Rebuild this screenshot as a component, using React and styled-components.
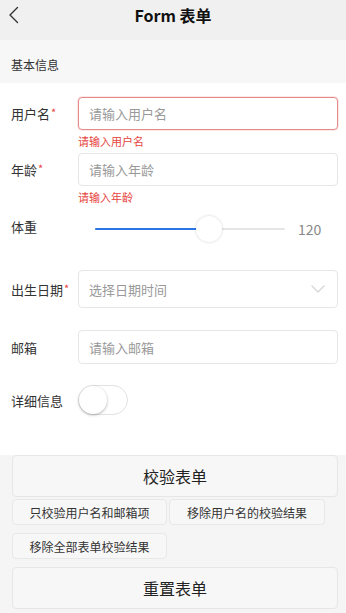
import React, { useState } from "react";
import styled, { createGlobalStyle } from "styled-components";

const GlobalStyle = createGlobalStyle`
  html, body {
    margin: 0;
    padding: 0;
    background: #f5f5f5;
  }
  body {
    font-family: "Noto Sans CJK SC", "Noto Sans", "Liberation Sans", sans-serif;
    color: #333;
  }
  * {
    box-sizing: border-box;
  }
`;

const App = () => {
  const [weight] = useState(120);
  const percent = 0.6; // 滑块位置

  return (
    <Page>
      <GlobalStyle />
      <NavBar>
        <BackButton aria-label="back">
          <svg width="12" height="18" viewBox="0 0 12 18" fill="none">
            <polyline
              points="9.5,1.5 2,9 9.5,16.5"
              stroke="#333"
              strokeWidth="1.4"
              strokeLinecap="round"
              strokeLinejoin="round"
            />
          </svg>
        </BackButton>
        <NavTitle>Form 表单</NavTitle>
      </NavBar>

      <SectionTitle>基本信息</SectionTitle>

      <FormBody>
        <Row>
          <Label required>用户名</Label>
          <Input placeholder="请输入用户名" $error />
        </Row>
        <ErrorText>请输入用户名</ErrorText>

        <Row>
          <Label required>年龄</Label>
          <Input placeholder="请输入年龄" />
        </Row>
        <ErrorText>请输入年龄</ErrorText>

        <SliderRow>
          <Label $nudge={-3}>体重</Label>
          <SliderWrap>
            <Track>
              <TrackFill style={{ width: `${percent * 100}%` }} />
              <Thumb style={{ left: `${percent * 100}%` }} />
            </Track>
          </SliderWrap>
          <SliderValue>{weight}</SliderValue>
        </SliderRow>

        <Row $gap={21}>
          <Label required>出生日期</Label>
          <Picker>
            <span>选择日期时间</span>
            <svg width="14" height="8" viewBox="0 0 14 8" fill="none">
              <polyline
                points="1,1 7,7 13,1"
                stroke="#d5d5d5"
                strokeWidth="1.2"
                strokeLinecap="round"
                strokeLinejoin="round"
              />
            </svg>
          </Picker>
        </Row>

        <Row $gap={22}>
          <Label>邮箱</Label>
          <Input placeholder="请输入邮箱" $h={34} />
        </Row>

        <Row $gap={21}>
          <Label>详细信息</Label>
          <Switch>
            <SwitchKnob />
          </Switch>
        </Row>
      </FormBody>

      <Actions>
        <BigButton>校验表单</BigButton>
        <SmallRow>
          <SmallButton $w={155}>只校验用户名和邮箱项</SmallButton>
          <SmallButton $w={156}>移除用户名的校验结果</SmallButton>
        </SmallRow>
        <SmallRow $top={8}>
          <SmallButton $w={155}>移除全部表单校验结果</SmallButton>
        </SmallRow>
        <BigButton $top={8}>重置表单</BigButton>
      </Actions>
    </Page>
  );
};

export default App;

const Page = styled.div`
  width: 346px;
  min-height: 613px;
  background: #f5f5f5;
`;

const NavBar = styled.header`
  height: 40px;
  background: #f0f0f0;
  display: flex;
  align-items: center;
  justify-content: center;
  position: relative;
`;

const BackButton = styled.div`
  position: absolute;
  left: 8px;
  top: 6px;
  width: 12px;
  height: 18px;
  display: flex;
`;

const NavTitle = styled.h1`
  margin: 0;
  margin-top: -10px;
  font-size: 16px;
  font-weight: 700;
  color: #111;
`;

const SectionTitle = styled.div`
  height: 43px;
  padding: 0 11px;
  display: flex;
  align-items: center;
  padding-top: 5px;
  background: #f7f7f7;
  font-size: 12px;
  color: #333;
`;

const FormBody = styled.div`
  background: #fff;
  padding: 14px 8px 40px 11px;
`;

const Row = styled.div`
  display: flex;
  align-items: center;
  margin-top: ${(p) => p.$gap || 0}px;
`;

const LabelText = styled.label`
  width: 67px;
  flex-shrink: 0;
  font-size: 13px;
  color: #333;
  position: relative;
  top: ${(p) => p.$nudge || 0}px;

  em {
    font-style: normal;
    color: #e64340;
    font-size: 11px;
    position: relative;
    top: -2px;
    margin-left: 1px;
  }
`;

const Label = ({ required, children, $nudge }) => (
  <LabelText $nudge={$nudge}>
    {children}
    {required && <em>*</em>}
  </LabelText>
);

const Input = styled.input`
  flex: 1;
  height: ${(p) => p.$h || 33}px;
  border: 1px solid ${(p) => (p.$error ? "#e58a8a" : "#e6e6e6")};
  border-radius: 4px;
  padding: 0 10px;
  font-size: 13px;
  font-family: inherit;
  color: #333;
  outline: none;
  background: #fff;
  box-shadow: ${(p) => (p.$error ? "0 0 0 1px rgba(230,100,100,0.15)" : "none")};

  &::placeholder {
    color: #999;
  }
`;

const ErrorText = styled.div`
  height: 23px;
  line-height: 23px;
  padding-left: 67px;
  font-size: 11px;
  color: #e64340;
`;

const SliderRow = styled.div`
  display: flex;
  align-items: center;
  height: 40px;
`;

const SliderWrap = styled.div`
  width: 190px;
  margin-left: 17px;
  padding: 13px 0;
  position: relative;
`;

const Track = styled.div`
  position: relative;
  height: 2px;
  background: #e5e5e5;
  border-radius: 1px;
`;

const TrackFill = styled.div`
  position: absolute;
  left: 0;
  top: 0;
  height: 2px;
  background: #2a76e8;
  border-radius: 1px;
`;

const Thumb = styled.div`
  position: absolute;
  top: 50%;
  width: 26px;
  height: 26px;
  margin-left: -13px;
  margin-top: -13px;
  border-radius: 50%;
  background: #fff;
  box-shadow: 0 0 3px rgba(0, 0, 0, 0.18);
`;

const SliderValue = styled.span`
  margin-left: 13px;
  font-size: 14px;
  color: #888;
`;

const Picker = styled.div`
  flex: 1;
  height: 38px;
  border: 1px solid #e6e6e6;
  border-radius: 4px;
  padding: 0 12px 0 10px;
  display: flex;
  align-items: center;
  justify-content: space-between;
  font-size: 13px;
  color: #999;
`;

const Switch = styled.div`
  width: 50px;
  height: 30px;
  border-radius: 15px;
  border: 1px solid #e2e2e2;
  background: #fff;
  position: relative;
`;

const SwitchKnob = styled.div`
  position: absolute;
  left: 0;
  top: 0;
  width: 28px;
  height: 28px;
  border-radius: 50%;
  background: #fff;
  box-shadow: 0 1px 3px rgba(0, 0, 0, 0.3);
`;

const Actions = styled.div`
  padding: 0 8px 4px 12px;
  display: flex;
  flex-direction: column;
`;

const BigButton = styled.button`
  height: 42px;
  margin-top: ${(p) => p.$top || 0}px;
  border: 1px solid #e6e6e6;
  border-radius: 4px;
  background: #f7f7f7;
  font-family: inherit;
  font-size: 16px;
  color: #222;
  cursor: pointer;
`;

const SmallRow = styled.div`
  display: flex;
  gap: 2px;
  margin-top: ${(p) => (p.$top === undefined ? 2 : p.$top)}px;
`;

const SmallButton = styled.button`
  width: ${(p) => p.$w}px;
  height: 26px;
  border: 1px solid #e8e8e8;
  border-radius: 4px;
  background: #f7f7f7;
  font-family: inherit;
  font-size: 12px;
  color: #333;
  padding: 0;
  cursor: pointer;
`;
